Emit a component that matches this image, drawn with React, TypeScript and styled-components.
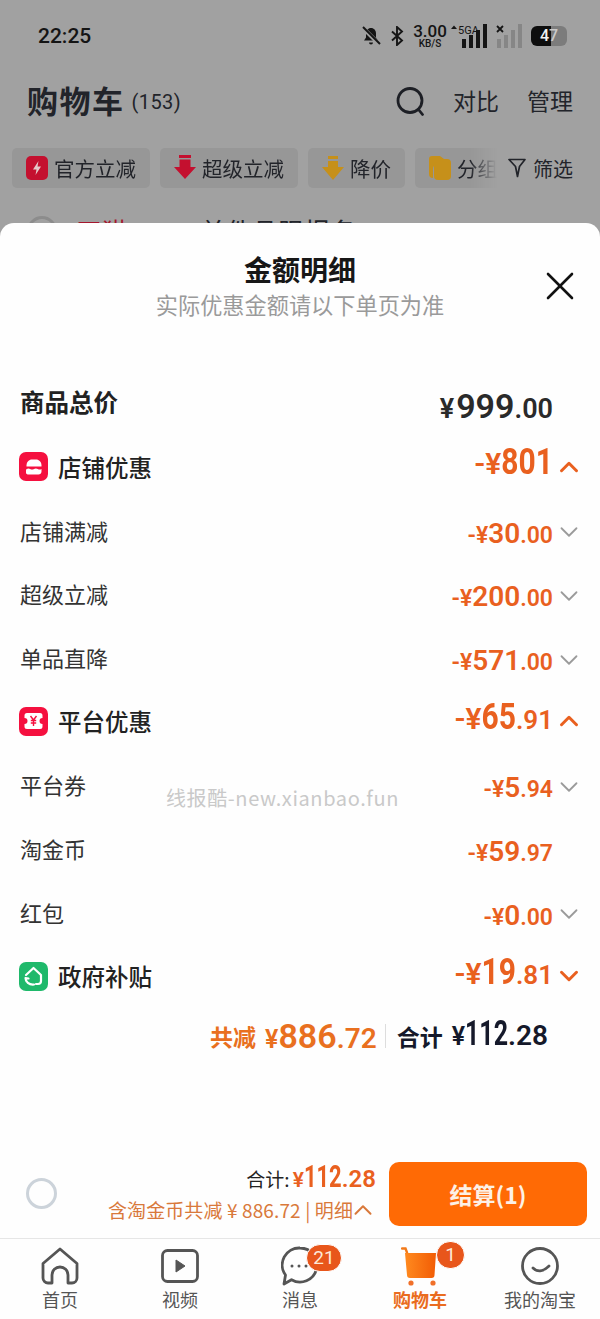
import React from "react"
import styled, { createGlobalStyle } from "styled-components"
import { ChevronDown, ChevronUp, X } from "lucide-react"

const GlobalStyle = createGlobalStyle`
  html, body {
    margin: 0;
    padding: 0;
    background: #fefefe;
  }
  * {
    box-sizing: border-box;
  }
`

const CJK = `"Noto Sans CJK SC", "Noto Sans", sans-serif`
const NUM = `Roboto, "Noto Sans CJK SC", sans-serif`
const ORANGE = "#e9601f"

const Page = styled.div`
  width: 600px;
  height: 1319px;
  position: relative;
  overflow: hidden;
  display: flex;
  flex-direction: column;
  font-family: ${CJK};
  background: #fefefe;
`

const Backdrop = styled.div`
  height: 223px;
  flex: none;
  background: #a1a1a1;
  overflow: hidden;
  color: #22242a;
`

const StatusBar = styled.div`
  height: 70px;
  padding: 1px 33px 0 38px;
  display: flex;
  align-items: center;
  justify-content: space-between;
`

const Clock = styled.div`
  font: 500 21px ${NUM};
  color: #141414;
`

const StatusIcons = styled.div`
  display: flex;
  align-items: center;
  color: #151515;
`

const StatusSlot = styled.div<{ $gap: number }>`
  display: flex;
  margin-left: ${(p) => p.$gap}px;
`

const Speed = styled.div`
  display: flex;
  flex-direction: column;
  align-items: center;
  font: 500 17px/15px ${NUM};
  width: 34px;
  span {
    font-size: 10px;
    line-height: 9px;
  }
`

const Battery = styled.div`
  width: 36px;
  height: 20px;
  border-radius: 6px;
  background: linear-gradient(to right, #0e0e0e 56%, #7c7c7c 56%);
  color: #f2f2f2;
  font: 500 16px/20px ${NUM};
  text-align: center;
  span {
    color: #c9c9c9;
  }
`

const TitleBar = styled.div`
  height: 62px;
  padding: 0 27px;
  display: flex;
  align-items: center;
`

const CartTitle = styled.div`
  font-size: 31px;
  line-height: 40px;
  font-weight: 700;
  letter-spacing: 1.5px;
  margin-bottom: 2px;
`

const CartCount = styled.div`
  font: 400 20px ${NUM};
  letter-spacing: 0.4px;
  margin: 2px 0 0 7px;
  flex: 1;
`

const TitleAction = styled.div`
  font-size: 23px;
  line-height: 32px;
  margin: 0 0 3px 28px;
`

const ChipRow = styled.div`
  margin-top: 16px;
  padding-left: 12px;
  display: flex;
  align-items: center;
`

const Chips = styled.div`
  width: 485px;
  display: flex;
  gap: 10px;
  overflow: hidden;
  mask-image: linear-gradient(to right, #000 458px, transparent 485px);
`

const Chip = styled.div`
  height: 40px;
  flex: none;
  padding: 0 14px;
  display: flex;
  align-items: center;
  gap: 6px;
  border-radius: 5px;
  background: #979797;
  font-size: 20.5px;
  white-space: nowrap;
`

const FilterButton = styled.div`
  margin-left: 11px;
  display: flex;
  align-items: center;
  gap: 7px;
  font-size: 20px;
`

const HiddenRow = styled.div`
  margin-top: 28px;
  padding-left: 27px;
  display: flex;
  align-items: flex-start;
  gap: 19px;
  font-size: 26px;
  line-height: 30px;
`

const HiddenCircle = styled.div`
  width: 30px;
  height: 30px;
  border-radius: 50%;
  border: 3px solid #8c8c8c;
`

const HiddenTag = styled.span`
  color: #a5162d;
  width: 105px;
`

const Sheet = styled.div`
  flex: 1;
  min-height: 0;
  border-radius: 14px 14px 0 0;
  display: flex;
  flex-direction: column;
  background: #fefefe;
`

const SheetWrap = styled.div`
  flex: 1;
  min-height: 0;
  display: flex;
  background: #a1a1a1;
`

const SheetHeader = styled.div`
  height: 148px;
  flex: none;
  padding-top: 27px;
  position: relative;
  text-align: center;
`

const SheetTitle = styled.div`
  font-size: 28px;
  line-height: 39px;
  font-weight: 700;
  color: #171717;
`

const SheetSubtitle = styled.div`
  font-size: 22.2px;
  line-height: 30px;
  color: #9a9a9a;
`

const CloseButton = styled.div`
  position: absolute;
  top: 39px;
  right: 16px;
  color: #111;
  display: flex;
`

const Rows = styled.div`
  flex: none;
  padding: 0 22px 0 20px;
`

const Row = styled.div`
  height: 63.7px;
  display: flex;
  align-items: center;
  justify-content: space-between;
`

const SummaryLabel = styled.div`
  font-size: 24.5px;
  line-height: 34px;
  font-weight: 700;
  color: #222;
  margin-bottom: 2px;
`

const GroupLabel = styled.div`
  display: flex;
  align-items: center;
  gap: 10px;
  margin-left: -1px;
  font-size: 23.5px;
  font-weight: 500;
  color: #222;
`

const DetailLabel = styled.div`
  font-size: 22px;
  color: #333;
  margin-top: -1px;
`

const BadgeIcon = styled.div<{ $color: string }>`
  width: 29px;
  height: 29px;
  border-radius: 7px;
  background: ${(p) => p.$color};
  display: flex;
  align-items: center;
  justify-content: center;
`

const RowValue = styled.div`
  display: flex;
  align-items: center;
`

const ChevronSlot = styled.div<{ $color: string; $shift?: number }>`
  width: 25px;
  height: 20px;
  margin-top: ${(p) => p.$shift ?? 0}px;
  display: flex;
  align-items: center;
  justify-content: flex-end;
  color: ${(p) => p.$color};
  svg {
    flex: none;
    margin-right: -6px;
  }
`

const Amount = styled.div<{ $color?: string; $shift?: number }>`
  display: flex;
  align-items: baseline;
  color: ${(p) => p.$color ?? ORANGE};
  margin-top: ${(p) => p.$shift ?? 0}px;
`

const Prefix = styled.span<{ $size: number; $gap?: number }>`
  font: 600 ${(p) => p.$size}px ${NUM};
  margin-right: ${(p) => p.$gap ?? 0}px;
`

const Whole = styled.span<{ $size: number; $tall?: number }>`
  display: inline-block;
  font: ${(p) => (p.$tall ? 700 : 600)} ${(p) => p.$size}px ${NUM};
  transform: scaleY(${(p) => p.$tall ?? 1});
  transform-origin: 50% 78%;
`

const Decimal = styled.span<{ $size: number }>`
  font: 600 ${(p) => p.$size}px ${NUM};
`

const TotalRow = styled.div`
  height: 56px;
  padding-right: 52px;
  display: flex;
  align-items: center;
  justify-content: flex-end;
`

const TotalLabel = styled.span<{ $color: string }>`
  font-size: 23px;
  font-weight: 700;
  color: ${(p) => p.$color};
  margin-right: 9px;
`

const TotalSplit = styled.div`
  width: 1px;
  height: 24px;
  background: #ddd;
  margin: 0 11px 0 8px;
`

const Spacer = styled.div`
  flex: 1;
`

const CheckoutBar = styled.div`
  flex: none;
  height: 77px;
  padding: 0 13px 13px 26px;
  display: flex;
  align-items: center;
  border-bottom: 1px solid #e6e6e6;
`

const Radio = styled.div`
  width: 31px;
  height: 31px;
  border-radius: 50%;
  border: 3px solid #ccd3da;
  flex: none;
`

const CheckoutInfo = styled.div`
  flex: 1;
  padding-right: 13px;
  display: flex;
  flex-direction: column;
  align-items: flex-end;
`

const SumLine = styled.div`
  display: flex;
  align-items: baseline;
  gap: 3px;
  height: 33px;
  font-size: 19px;
  color: #222;
`

const SavingLine = styled.div`
  display: flex;
  align-items: center;
  font-size: 19px;
  line-height: 24px;
  letter-spacing: 0.12px;
  color: #d9793b;
  white-space: nowrap;
  svg {
    flex: none;
    margin: -4px -2px -4px -5px;
  }
`

const CheckoutButton = styled.div`
  width: 198px;
  height: 64px;
  border-radius: 10px;
  background: #ff6a05;
  color: #fdf1e6;
  font-size: 23px;
  font-weight: 700;
  display: flex;
  align-items: center;
  justify-content: center;
`

const TabBar = styled.div`
  flex: none;
  height: 80px;
  display: grid;
  grid-template-columns: repeat(5, 120px);
`

const Tab = styled.div<{ $active?: boolean }>`
  position: relative;
  padding-top: 8px;
  display: flex;
  flex-direction: column;
  align-items: center;
  color: ${(p) => (p.$active ? "#ea6c20" : "#555")};
  font-size: 18px;
  line-height: 26px;
  font-weight: ${(p) => (p.$active ? 700 : 400)};
`

const TabIcon = styled.div`
  height: 38px;
  display: flex;
  align-items: center;
  margin-bottom: 1px;
`

const TabBadge = styled.div<{ $left: number; $top: number; $width: number }>`
  position: absolute;
  left: ${(p) => p.$left}px;
  top: ${(p) => p.$top}px;
  width: ${(p) => p.$width}px;
  height: 28px;
  border-radius: 14px;
  border: 1px solid #fff;
  background: #e8561b;
  color: #fde9d8;
  font: 400 19px/26px ${NUM};
  text-align: center;
`

const Watermark = styled.div`
  position: absolute;
  left: 166px;
  top: 784px;
  font-size: 20px;
  line-height: 28px;
  letter-spacing: 0.6px;
  color: #c9c9c9;
  white-space: nowrap;
`

const BellOff = () => (
  <svg width="20" height="20" viewBox="0 0 20 20" fill="currentColor">
    <path d="M10 2c3 0 5 2.400 5 5.500v4l2 3H3l2-3v-4C5 4.400 7 2 10 2z" />
    <path d="M8 16.500h4a2 2 0 0 1-4 0z" />
    <path d="M2 2l16 16" stroke="#a1a1a1" strokeWidth="4" />
    <path d="M2 1l17 17" stroke="currentColor" strokeWidth="2" />
  </svg>
)

const Bluetooth = () => (
  <svg width="14" height="20" viewBox="0 0 14 20" fill="none" stroke="currentColor" strokeWidth="1.900">
    <path d="M2 5.500l10 9-5 4.500V1l5 4.500-10 9" />
  </svg>
)

const Signal = () => (
  <svg width="38" height="24" viewBox="0 0 38 24" fill="currentColor">
    <path d="M1 5l3-3.500L7 5z" />
    <text x="8" y="9.500" fontSize="11" fontFamily="Roboto, sans-serif">5GA</text>
    <rect x="12" y="15" width="4" height="9" />
    <rect x="19" y="11" width="4" height="13" />
    <rect x="26" y="6" width="4" height="18" />
    <rect x="33" y="0" width="4" height="24" />
  </svg>
)

const SignalOff = () => (
  <svg width="26" height="24" viewBox="0 0 26 24">
    <path d="M1 2l6 6M7 2L1 8" stroke="#151515" strokeWidth="1.800" />
    <g fill="#868686">
      <rect x="1" y="15" width="4" height="9" />
      <rect x="8" y="11" width="4" height="13" />
      <rect x="15" y="6" width="4" height="18" />
      <rect x="22" y="0" width="4" height="24" />
    </g>
  </svg>
)

const SearchGlyph = () => (
  <svg width="29" height="29" viewBox="0 0 29 29" fill="none" stroke="#1d1f25" strokeWidth="2.800">
    <circle cx="14" cy="13.500" r="12" />
    <path d="M22.500 22.500l4 5" strokeLinecap="round" />
  </svg>
)

const FlashGlyph = () => (
  <svg width="22" height="24" viewBox="0 0 22 24">
    <rect width="22" height="24" rx="5" fill="#c4102f" />
    <path d="M12.500 5L7 13.500h3.500L9.500 19l5.500-8.500h-3.500z" fill="#e4c9c9" />
  </svg>
)

const DropGlyph = () => (
  <svg width="22" height="26" viewBox="0 0 22 26" fill="#c4102f">
    <path d="M5 0h12v3H5zM5.500 4.500h11V12H22L11 24 0 12h5.500z" />
  </svg>
)

const PriceGlyph = () => (
  <svg width="22" height="26" viewBox="0 0 22 26" fill="#c6901a">
    <path d="M6 1h10v3H6zM6 6h10v6h6L11 25 0 12h6z" />
  </svg>
)

const FolderGlyph = () => (
  <svg width="22" height="24" viewBox="0 0 22 24" fill="#c6901a">
    <path d="M3 0h8l4 3h3a4 4 0 0 1 4 4v2H8a4 4 0 0 0-4 4v9a4 4 0 0 1-4-4V3a3 3 0 0 1 3-3z" />
    <rect x="5" y="6" width="17" height="18" rx="4" />
  </svg>
)

const FunnelGlyph = () => (
  <svg width="18" height="20" viewBox="0 0 18 20" fill="none" stroke="#22242a" strokeWidth="1.700" strokeLinejoin="round">
    <path d="M1 1.500h16l-5.500 7-2 10-2-10z" />
  </svg>
)

const ShopGlyph = () => (
  <svg width="16" height="16" viewBox="0 0 16 16" fill="#fff">
    <path d="M0.500 6.500C0.500 3 3 0.500 6 0.500h4c3 0 5.500 2.500 5.500 6v1H0.500z" />
    <path d="M0.500 10c1.500-.8 2.500-.8 3.700 0s2.500.8 3.800 0 2.500-.8 3.800 0 2.500.8 3.700 0v2.500c0 1.800-1.400 3-3 3h-10c-1.600 0-3-1.200-3-3z" />
  </svg>
)

const CouponGlyph = () => (
  <svg width="19" height="16" viewBox="0 0 19 16">
    <path d="M3 0h13a2.500 2.500 0 0 1 2.500 2.500V5a3 3 0 0 0 0 6v2.500A2.500 2.500 0 0 1 16 16H3a2.500 2.500 0 0 1-2.500-2.500V11a3 3 0 0 0 0-6V2.500A2.500 2.500 0 0 1 3 0z" fill="#fff" />
    <path d="M6.500 3l3 4 3-4M9.500 7v6M6.800 7.500h5.400M6.800 10h5.400" stroke="#f5103f" strokeWidth="1.400" fill="none" />
  </svg>
)

const GovGlyph = () => (
  <svg width="23" height="23" viewBox="0 0 23 23" fill="none" stroke="#fff" strokeWidth="2.200" strokeLinecap="round" strokeLinejoin="round">
    <path d="M4 10l7.500-7L19 10v6a3 3 0 0 1-3 3h-2" />
    <path d="M3.500 13c0 4 3.500 7 8.500 6.500M4.500 16.500L3.500 13l3 .5" />
  </svg>
)

const HomeGlyph = () => (
  <svg width="38" height="38" viewBox="0 0 38 38" fill="none" stroke="#555" strokeWidth="2.800" strokeLinejoin="round">
    <path d="M2 16.500L19 2l17 14.500V31a5 5 0 0 1-5 5h-4V28a8 8 0 0 0-16 0v8H7a5 5 0 0 1-5-5z" />
  </svg>
)

const VideoGlyph = () => (
  <svg width="38" height="34" viewBox="0 0 38 34">
    <rect x="1.500" y="1.500" width="35" height="31" rx="5" fill="none" stroke="#555" strokeWidth="2.800" />
    <path d="M15 11l9 6-9 6z" fill="#555" stroke="#555" strokeLinejoin="round" />
  </svg>
)

const ChatGlyph = () => (
  <svg width="38" height="40" viewBox="0 0 38 40" fill="none" stroke="#555" strokeWidth="2.800">
    <path d="M19 2a17 17 0 1 1-8.500 31.700L3 38l1.500-9A17 17 0 0 1 19 2z" strokeLinejoin="round" />
    <g fill="#555" stroke="none">
      <circle cx="11" cy="20" r="1.500" />
      <circle cx="18" cy="20" r="1.500" />
      <circle cx="25" cy="20" r="1.500" />
    </g>
  </svg>
)

const CartGlyph = () => (
  <svg width="38" height="40" viewBox="0 0 38 40">
    <defs>
      <linearGradient id="cartFill" x1="0" y1="0" x2="1" y2="0">
        <stop offset="0" stopColor="#ff8a1f" />
        <stop offset="1" stopColor="#f25c05" />
      </linearGradient>
    </defs>
    <path d="M1 2.500h3.500l1.500 4" fill="none" stroke="#f27a1a" strokeWidth="2.400" strokeLinecap="round" />
    <path d="M4 7h31l-1.500 22a3 3 0 0 1-3 3H9a3 3 0 0 1-3-3z" fill="url(#cartFill)" />
    <circle cx="10" cy="37" r="2.600" fill="#f0702a" />
    <circle cx="32" cy="37" r="2.600" fill="#f0702a" />
  </svg>
)

const SmileGlyph = () => (
  <svg width="38" height="38" viewBox="0 0 38 38" fill="none" stroke="#555" strokeWidth="2.800" strokeLinecap="round">
    <circle cx="19" cy="19" r="17.500" />
    <path d="M12 21c4 4 10 4 16-2" />
  </svg>
)

type Detail = { label: string; whole: string; decimal: string; chevron?: boolean }

const shopRows: Detail[] = [
  { label: "店铺满减", whole: "30", decimal: ".00", chevron: true },
  { label: "超级立减", whole: "200", decimal: ".00", chevron: true },
  { label: "单品直降", whole: "571", decimal: ".00", chevron: true },
]

const platformRows: Detail[] = [
  { label: "平台券", whole: "5", decimal: ".94", chevron: true },
  { label: "淘金币", whole: "59", decimal: ".97" },
  { label: "红包", whole: "0", decimal: ".00", chevron: true },
]

const DetailRow = ({ item }: { item: Detail }) => (
  <Row>
    <DetailLabel>{item.label}</DetailLabel>
    <RowValue>
      <Amount $shift={6}>
        <Prefix $size={23}>-¥</Prefix>
        <Whole $size={28}>{item.whole}</Whole>
        <Decimal $size={23}>{item.decimal}</Decimal>
      </Amount>
      <ChevronSlot $color="#9b9b9b" $shift={4}>
        {item.chevron && <ChevronDown size={30} strokeWidth={1.8} absoluteStrokeWidth />}
      </ChevronSlot>
    </RowValue>
  </Row>
)

const GroupRow = ({
  icon,
  color,
  label,
  whole,
  decimal,
  open,
}: {
  icon: React.ReactNode
  color: string
  label: string
  whole: string
  decimal?: string
  open?: boolean
}) => {
  const Chevron = open ? ChevronUp : ChevronDown
  return (
    <Row>
      <GroupLabel>
        <BadgeIcon $color={color}>{icon}</BadgeIcon>
        {label}
      </GroupLabel>
      <RowValue>
        <Amount $shift={-6}>
          <Prefix $size={30}>-¥</Prefix>
          <Whole $size={30} $tall={1.22}>{whole}</Whole>
          {decimal && <Decimal $size={26}>{decimal}</Decimal>}
        </Amount>
        <ChevronSlot $color={ORANGE}>
          <Chevron size={30} strokeWidth={3} absoluteStrokeWidth />
        </ChevronSlot>
      </RowValue>
    </Row>
  )
}

export default function App() {
  return (
    <Page>
      <GlobalStyle />
      <Backdrop>
        <StatusBar>
          <Clock>22:25</Clock>
          <StatusIcons>
            <BellOff />
            <StatusSlot $gap={9}><Bluetooth /></StatusSlot>
            <StatusSlot $gap={9}>
              <Speed>
                3.00
                <span>KB/S</span>
              </Speed>
            </StatusSlot>
            <StatusSlot $gap={3}><Signal /></StatusSlot>
            <StatusSlot $gap={8}><SignalOff /></StatusSlot>
            <StatusSlot $gap={9}><Battery>4<span>7</span></Battery></StatusSlot>
          </StatusIcons>
        </StatusBar>
        <TitleBar>
          <CartTitle>购物车</CartTitle>
          <CartCount>(153)</CartCount>
          <SearchGlyph />
          <TitleAction>对比</TitleAction>
          <TitleAction>管理</TitleAction>
        </TitleBar>
        <ChipRow>
          <Chips>
            <Chip><FlashGlyph />官方立减</Chip>
            <Chip><DropGlyph />超级立减</Chip>
            <Chip><PriceGlyph />降价</Chip>
            <Chip><FolderGlyph />分组</Chip>
          </Chips>
          <FilterButton><FunnelGlyph />筛选</FilterButton>
        </ChipRow>
        <HiddenRow>
          <HiddenCircle />
          <HiddenTag>天猫</HiddenTag>
          <span>单件品限报名</span>
        </HiddenRow>
      </Backdrop>

      <SheetWrap>
        <Sheet>
          <SheetHeader>
            <SheetTitle>金额明细</SheetTitle>
            <SheetSubtitle>实际优惠金额请以下单页为准</SheetSubtitle>
            <CloseButton><X size={48} strokeWidth={2.6} absoluteStrokeWidth /></CloseButton>
          </SheetHeader>

          <Rows>
            <Row>
              <SummaryLabel>商品总价</SummaryLabel>
              <RowValue>
                <Amount $color="#2a2a2a" $shift={6}>
                  <Prefix $size={27} $gap={2}>¥</Prefix>
                  <Whole $size={34}>999</Whole>
                  <Decimal $size={27}>.00</Decimal>
                </Amount>
                <ChevronSlot $color="transparent" />
              </RowValue>
            </Row>
            <GroupRow icon={<ShopGlyph />} color="#f5103f" label="店铺优惠" whole="801" open />
            {shopRows.map((item) => <DetailRow key={item.label} item={item} />)}
            <GroupRow icon={<CouponGlyph />} color="#f5103f" label="平台优惠" whole="65" decimal=".91" open />
            {platformRows.map((item) => <DetailRow key={item.label} item={item} />)}
            <GroupRow icon={<GovGlyph />} color="#1fb96b" label="政府补贴" whole="19" decimal=".81" />
          </Rows>

          <TotalRow>
            <TotalLabel $color="#e9701f">共减</TotalLabel>
            <Amount $color="#e9701f">
              <Prefix $size={25}>¥</Prefix>
              <Whole $size={34}>886</Whole>
              <Decimal $size={28}>.72</Decimal>
            </Amount>
            <TotalSplit />
            <TotalLabel $color="#15192a">合计</TotalLabel>
            <Amount $color="#15192a">
              <Prefix $size={25}>¥</Prefix>
              <Whole $size={25} $tall={1.4}>112</Whole>
              <Decimal $size={28}>.28</Decimal>
            </Amount>
          </TotalRow>

          <Spacer />

          <CheckoutBar>
            <Radio />
            <CheckoutInfo>
              <SumLine>
                合计:
                <Amount>
                  <Prefix $size={21}>¥</Prefix>
                  <Whole $size={22} $tall={1.45}>112</Whole>
                  <Decimal $size={24}>.28</Decimal>
                </Amount>
              </SumLine>
              <SavingLine>
                含淘金币共减 ¥ 886.72 | 明细
                <ChevronUp size={30} strokeWidth={2} absoluteStrokeWidth />
              </SavingLine>
            </CheckoutInfo>
            <CheckoutButton>结算(1)</CheckoutButton>
          </CheckoutBar>

          <TabBar>
            <Tab><TabIcon><HomeGlyph /></TabIcon>首页</Tab>
            <Tab><TabIcon><VideoGlyph /></TabIcon>视频</Tab>
            <Tab>
              <TabIcon><ChatGlyph /></TabIcon>
              消息
              <TabBadge $left={66} $top={5} $width={36}>21</TabBadge>
            </Tab>
            <Tab $active>
              <TabIcon><CartGlyph /></TabIcon>
              购物车
              <TabBadge $left={76} $top={2} $width={29}>1</TabBadge>
            </Tab>
            <Tab><TabIcon><SmileGlyph /></TabIcon>我的淘宝</Tab>
          </TabBar>
        </Sheet>
      </SheetWrap>

      <Watermark>线报酷-new.xianbao.fun</Watermark>
    </Page>
  )
}
